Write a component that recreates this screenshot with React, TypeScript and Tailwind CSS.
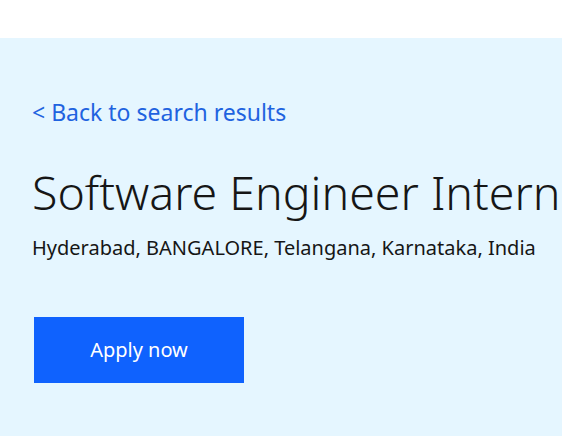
export default function App() {
  return (
    <div className="w-[562px] h-[436px] overflow-hidden bg-white" style={{ fontFamily: '"Noto Sans", "Open Sans", sans-serif' }}>
      <div className="h-[38px] bg-white" />
      <div className="h-[398px] bg-[#e5f6ff] pl-[32px] pt-[60px] whitespace-nowrap">
        <a href="#" className="block text-[23px] leading-[28px] text-[#1f63e0]">
          &lt; Back to search results
        </a>
        <h1 className="mt-[38px] text-[46.5px] leading-[56px] font-light text-[#161616]">
          Software Engineer Intern
        </h1>
        <p className="mt-[14px] text-[20px] leading-[27px] text-[#161616]">
          Hyderabad, BANGALORE, Telangana, Karnataka, India
        </p>
        <button className="mt-[56px] ml-[2px] w-[210px] h-[66px] bg-[#0f62fe] text-white text-[20px]">
          Apply now
        </button>
      </div>
    </div>
  );
}
